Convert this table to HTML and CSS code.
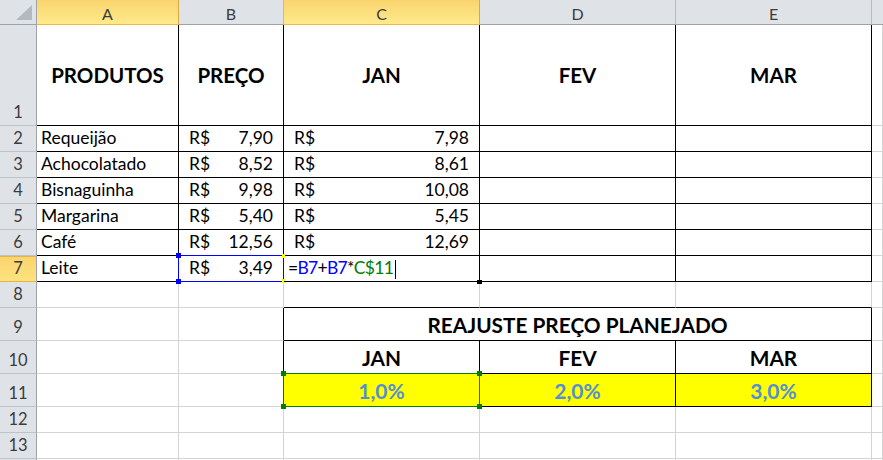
FILE: index.html
```html
<!DOCTYPE html>
<html lang="pt-BR">
<head>
<meta charset="utf-8">
<title>Planilha</title>
<link rel="stylesheet" href="styles.css">
</head>
<body>
<div class="sheet">
  <!-- column headers -->
  <div class="corner"><span class="tri"></span></div>
  <div class="ch sel">A</div>
  <div class="ch">B</div>
  <div class="ch sel">C</div>
  <div class="ch">D</div>
  <div class="ch">E</div>
  <div class="ch last"></div>

  <!-- row 1 -->
  <div class="rh">1</div>
  <div class="c bR bB hd">PRODUTOS</div>
  <div class="c bR bB hd">PREÇO</div>
  <div class="c bR bB hd">JAN</div>
  <div class="c bR bB hd">FEV</div>
  <div class="c bR bB hd">MAR</div>
  <div class="c"></div>

  <!-- row 2 -->
  <div class="rh">2</div>
  <div class="c bR bB t">Requeijão</div>
  <div class="c bR bB acc"><span>R$</span><span>7,90</span></div>
  <div class="c bR bB acc"><span>R$</span><span>7,98</span></div>
  <div class="c bR bB"></div>
  <div class="c bR bB"></div>
  <div class="c"></div>

  <!-- row 3 -->
  <div class="rh">3</div>
  <div class="c bR bB t">Achocolatado</div>
  <div class="c bR bB acc"><span>R$</span><span>8,52</span></div>
  <div class="c bR bB acc"><span>R$</span><span>8,61</span></div>
  <div class="c bR bB"></div>
  <div class="c bR bB"></div>
  <div class="c"></div>

  <!-- row 4 -->
  <div class="rh">4</div>
  <div class="c bR bB t">Bisnaguinha</div>
  <div class="c bR bB acc"><span>R$</span><span>9,98</span></div>
  <div class="c bR bB acc"><span>R$</span><span>10,08</span></div>
  <div class="c bR bB"></div>
  <div class="c bR bB"></div>
  <div class="c"></div>

  <!-- row 5 -->
  <div class="rh">5</div>
  <div class="c bR bB t">Margarina</div>
  <div class="c bR bB acc"><span>R$</span><span>5,40</span></div>
  <div class="c bR bB acc"><span>R$</span><span>5,45</span></div>
  <div class="c bR bB"></div>
  <div class="c bR bB"></div>
  <div class="c"></div>

  <!-- row 6 -->
  <div class="rh">6</div>
  <div class="c bR bB t">Café</div>
  <div class="c bR bB acc"><span>R$</span><span>12,56</span></div>
  <div class="c bR bB acc"><span>R$</span><span>12,69</span></div>
  <div class="c bR bB"></div>
  <div class="c bR bB"></div>
  <div class="c"></div>

  <!-- row 7 -->
  <div class="rh sel">7</div>
  <div class="c bR bB t">Leite</div>
  <div class="c bR bB acc ref">
    <span>R$</span><span>3,49</span>
    <i class="box blue"></i>
    <i class="sq blue tl"></i><i class="sq blue bl"></i>
    <i class="mk ytr"></i><i class="mk ybr"></i>
  </div>
  <div class="c bR bB t edit">
    <span class="k">=</span><span class="rb">B7</span><span class="k">+</span><span class="rb">B7</span><span class="k">*</span><span class="rg">C$11</span><span class="caret"></span>
    <i class="fill"></i>
  </div>
  <div class="c bR bB"></div>
  <div class="c bR bB"></div>
  <div class="c"></div>

  <!-- row 8 -->
  <div class="rh">8</div>
  <div class="c"></div>
  <div class="c"></div>
  <div class="c bB"></div>
  <div class="c bB"></div>
  <div class="c bB"></div>
  <div class="c"></div>

  <!-- row 9 -->
  <div class="rh">9</div>
  <div class="c"></div>
  <div class="c bR"></div>
  <div class="c bR bB hd2 span3">REAJUSTE PREÇO PLANEJADO</div>
  <div class="c"></div>

  <!-- row 10 -->
  <div class="rh">10</div>
  <div class="c"></div>
  <div class="c bR"></div>
  <div class="c bR bB hd2">JAN</div>
  <div class="c bR bB hd2">FEV</div>
  <div class="c bR bB hd2">MAR</div>
  <div class="c"></div>

  <!-- row 11 -->
  <div class="rh">11</div>
  <div class="c"></div>
  <div class="c bR"></div>
  <div class="c bR bB yel pct ref">
    1,0%
    <i class="box green"></i>
    <i class="sq green tl"></i><i class="sq green bl"></i>
    <i class="sq green tr"></i><i class="sq green br"></i>
  </div>
  <div class="c bR bB yel pct">2,0%</div>
  <div class="c bR bB yel pct">3,0%</div>
  <div class="c"></div>

  <!-- row 12 -->
  <div class="rh">12</div>
  <div class="c"></div>
  <div class="c"></div>
  <div class="c"></div>
  <div class="c"></div>
  <div class="c"></div>
  <div class="c"></div>

  <!-- row 13 -->
  <div class="rh">13</div>
  <div class="c"></div>
  <div class="c"></div>
  <div class="c"></div>
  <div class="c"></div>
  <div class="c"></div>
  <div class="c"></div>

  <!-- row 14 (partial) -->
  <div class="rh"></div>
  <div class="c"></div>
  <div class="c"></div>
  <div class="c"></div>
  <div class="c"></div>
  <div class="c"></div>
  <div class="c"></div>
</div>
</body>
</html>
```

FILE: styles.css
```css
html, body {
  margin: 0;
  padding: 0;
  background: #ffffff;
  overflow: hidden;
}

.sheet {
  display: grid;
  grid-template-columns: 37px 142px 105px 196px 196px 196px 1fr;
  grid-template-rows: 25px 101px repeat(7, 26px) repeat(3, 33px) 26px 26px 1fr;
  width: 883px;
  height: 460px;
  overflow: hidden;
  font-family: "Lato", "Liberation Sans", sans-serif;
  color: #000;
}

.sheet > div {
  box-sizing: border-box;
  min-width: 0;
  min-height: 0;
}

/* corner */
.corner {
  background: #dfe3e8;
  border-right: 1px solid #9fa3a8;
  border-bottom: 1px solid #9fa3a8;
  position: relative;
}
.tri {
  position: absolute;
  left: 16px;
  top: 5px;
  width: 0;
  height: 0;
  border-left: 16px solid transparent;
  border-bottom: 15px solid #b4b9bf;
}

/* column headers */
.ch {
  background: #dfe3e8;
  border-right: 1px solid #b7bcc2;
  border-bottom: 1px solid #9fa3a8;
  display: flex;
  align-items: center;
  justify-content: center;
  font-size: 16px;
  color: #3c3c3c;
  padding-top: 2px;
}
.ch.sel {
  background: linear-gradient(#f9d46d, #ffea8c);
  border-right: 1px solid #d9a845;
  border-bottom: 1px solid #f0b83c;
}
.ch.last {
  border-right: none;
}

/* row headers */
.rh {
  background: #dfe3e8;
  border-right: 1px solid #9fa3a8;
  border-bottom: 1px solid #bfc3c8;
  display: flex;
  align-items: flex-end;
  justify-content: center;
  font-size: 16.5px;
  color: #3c3c3c;
  padding-bottom: 3px;
  overflow: hidden;
}
.rh.sel {
  background: linear-gradient(#f9d46d, #ffe27e);
  border-bottom: 1px solid #e6b24a;
  box-shadow: inset 0 1px 0 #e6b24a;
}

/* cells */
.c {
  border-right: 1px solid #d4d4d4;
  border-bottom: 1px solid #d4d4d4;
  font-size: 17.5px;
  display: flex;
  align-items: flex-end;
  padding-bottom: 3px;
  white-space: nowrap;
}
.c.bR { border-right-color: #000; }
.c.bB { border-bottom-color: #000; }

.t {
  padding-left: 4px;
}
.acc {
  justify-content: space-between;
  padding-left: 10px;
  padding-right: 10px;
}

.hd {
  justify-content: center;
  align-items: center;
  padding-bottom: 0;
  font-weight: 700;
  font-size: 20.5px;
}
.hd2 {
  justify-content: center;
  align-items: center;
  padding-bottom: 0;
  font-weight: 700;
  font-size: 20.8px;
}
.span3 {
  grid-column: span 3;
}
.yel {
  background: #ffff00;
}
.pct {
  justify-content: center;
  align-items: center;
  padding-bottom: 0;
  font-weight: 700;
  font-size: 21px;
  color: #558ed5;
}

/* formula being edited */
.edit {
  letter-spacing: -0.7px;
}
.edit .k { color: #000; }
.edit .rb { color: #0000ff; }
.edit .rg { color: #008000; }
.caret {
  display: inline-block;
  width: 1px;
  height: 19px;
  background: #000;
  margin-left: 2px;
  align-self: flex-end;
  margin-bottom: -1px;
}

/* reference overlays */
.ref, .edit {
  position: relative;
}
.box {
  position: absolute;
  left: -1px;
  top: -1px;
  right: -1px;
  bottom: -1px;
  box-sizing: border-box;
  pointer-events: none;
}
.box.blue { border: 1px solid #0000ff; }
.box.green { border: 1px solid #007f00; }

.sq {
  position: absolute;
  width: 5px;
  height: 5px;
}
.sq.blue { background: #0000ff; }
.sq.green { background: #007f00; }
.sq.tl { left: -3px; top: -3px; }
.sq.bl { left: -3px; bottom: -3px; }
.sq.tr { right: -3px; top: -3px; }
.sq.br { right: -3px; bottom: -3px; }

.mk {
  position: absolute;
  width: 3px;
  height: 4px;
  background: #ffff00;
}
.mk.ytr { right: -2px; top: -2px; }
.mk.ybr { right: -2px; bottom: -2px; }

.fill {
  position: absolute;
  right: -3px;
  bottom: -3px;
  width: 5px;
  height: 4px;
  background: #000;
}
```
